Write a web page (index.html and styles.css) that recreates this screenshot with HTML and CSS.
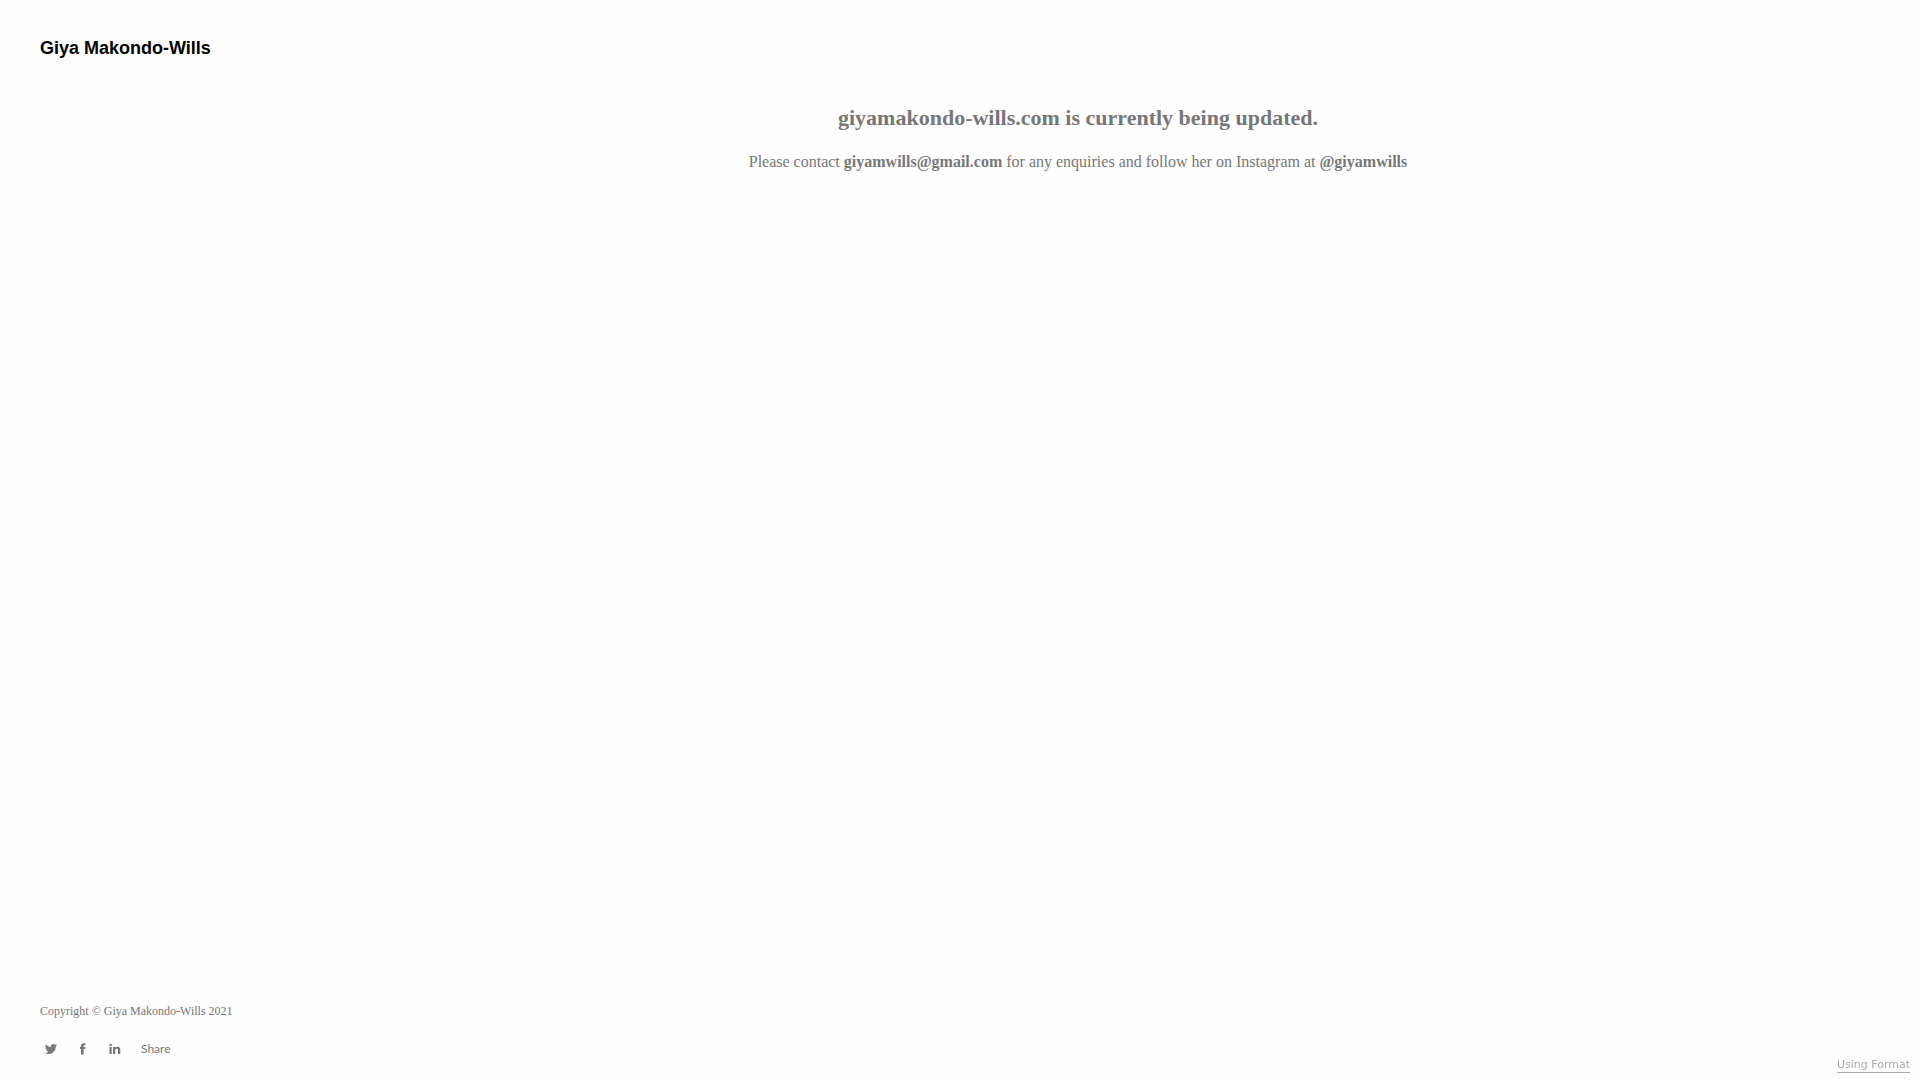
FILE: index.html
```html
<!DOCTYPE html>
<html lang="en">
  <head>
    <meta charset="utf-8">
    <title>Giya Makondo-Wills</title>
    <link rel="stylesheet" href="styles.css">
  </head>
  <body>
    <div class="page">
      <header class="sidebar">
        <h1 class="logo"><a href="#">Giya Makondo-Wills</a></h1>
        <footer class="footer">
          <p class="copyright">Copyright © Giya Makondo-Wills 2021</p>
          <div class="social">
            <a href="#" aria-label="Twitter">
              <svg viewBox="0 0 24 24" width="12" height="12"><path d="M24 4.600a10 10 0 0 1-2.800.8 5 5 0 0 0 2.100-2.700 10 10 0 0 1-3.100 1.200 4.900 4.900 0 0 0-8.400 4.500A14 14 0 0 1 1.700 3.200a4.900 4.900 0 0 0 1.500 6.600A5 5 0 0 1 1 9.100a4.900 4.900 0 0 0 3.900 4.900 5 5 0 0 1-2.200.1 4.900 4.900 0 0 0 4.600 3.400A10 10 0 0 1 0 19.500 14 14 0 0 0 21.500 7.100 10 10 0 0 0 24 4.600z"/></svg>
            </a>
            <a href="#" aria-label="Facebook">
              <svg viewBox="0 0 12 12" width="12" height="12"><path d="M4 11.500V6H3V4h1V3c0-1.800.9-2.800 2.700-2.800H8.500v2h-1c-.7 0-.9.3-.9.900V4h1.900l-.3 2H6.600v5.500z"/></svg>
            </a>
            <a href="#" aria-label="LinkedIn">
              <svg viewBox="0 0 12 12" width="12" height="12"><path d="M.5 1h2.200v2H.5zM.5 4h2.200v7H.5zM4 4h2.200v1c.4-.7 1.100-1.200 2.200-1.200 2 0 2.900 1.200 2.900 3V11H9V7.300c0-1-.3-1.600-1.300-1.600S6.200 6.400 6.200 7.300V11H4z"/></svg>
            </a>
            <a class="share" href="#">Share</a>
          </div>
        </footer>
      </header>
      <main class="content">
        <h2>giyamakondo-wills.com is currently being updated.</h2>
        <p>Please contact <a href="mailto:giyamwills@gmail.com">giyamwills@gmail.com</a> for any enquiries and follow her on Instagram at <a href="#">@giyamwills</a></p>
      </main>
    </div>
    <a class="badge" href="#">Using Format</a>
  </body>
</html>
```

FILE: styles.css
```css
* {
  box-sizing: border-box;
}
body {
  margin: 0;
  background-color: #fefefe;
  color: #777;
  font-family: "Liberation Serif", serif;
}
a {
  color: inherit;
  text-decoration: none;
}
.page {
  display: flex;
  min-height: 100vh;
}
.sidebar {
  display: flex;
  flex-direction: column;
  justify-content: space-between;
  width: 236px;
  padding: 36px 0 23px 40px;
}
.logo {
  margin: 0;
  color: #000;
  font-family: "Liberation Sans", sans-serif;
  font-size: 18px;
  line-height: 24px;
}
.copyright {
  margin: 0 0 20px;
  font-size: 12px;
  line-height: 20px;
  white-space: nowrap;
}
.social {
  display: flex;
  align-items: center;
  gap: 20px;
  padding-left: 5px;
}
.social svg {
  display: block;
  fill: #777;
}
.share {
  font-family: Lato, sans-serif;
  font-size: 12px;
  line-height: 16px;
}
.content {
  flex: 1;
  padding: 104px 40px 40px;
  text-align: center;
}
.content h2 {
  margin: 0 0 18px;
  font-size: 22px;
  line-height: 28px;
}
.content p {
  margin: 0;
  font-size: 16px;
  line-height: 24px;
}
.content p a {
  font-weight: bold;
}
.badge {
  position: fixed;
  right: 10px;
  bottom: 7px;
  border-bottom: 1px solid #aaa;
  color: #aaa;
  font-family: "DejaVu Sans", sans-serif;
  font-size: 11px;
  line-height: 15px;
}
```
